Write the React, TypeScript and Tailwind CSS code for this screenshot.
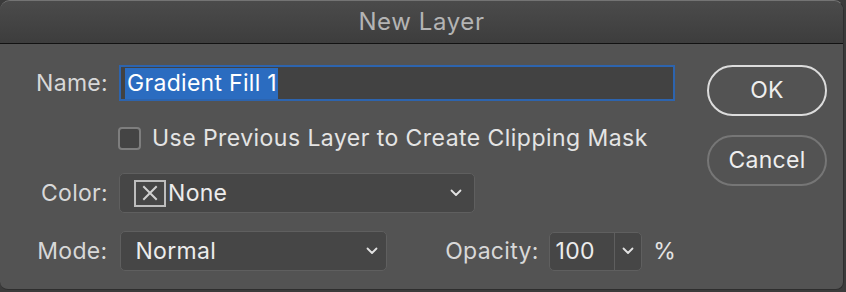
import React from 'react'

const Chevron: React.FC<{ className?: string }> = ({ className }) => (
  <svg width="12" height="8" viewBox="0 0 12 8" className={className}>
    <path d="M1.5 1.5 L6 6 L10.5 1.5" fill="none" stroke="#e2e2e2" strokeWidth="1.8" strokeLinecap="round" strokeLinejoin="round" />
  </svg>
)

const App: React.FC = () => {
  return (
    <div className="w-[846px] h-[292px] bg-[#3b3b3b] font-['Inter','Liberation_Sans',sans-serif] tracking-[0.3px]">
      <div className="w-[844px] h-[290px] rounded-t-[10px] rounded-b-[8px] overflow-hidden bg-[#535353] border-t border-[#747474] border-r border-r-[#2e2e2e] border-b border-b-[#2e2e2e] flex flex-col">
        {/* Title bar */}
        <div className="h-[43px] shrink-0 bg-gradient-to-b from-[#4b4b4b] to-[#3d3d3d] border-b border-[#121212] flex items-center justify-center">
          <span className="text-[24px] text-[#b4b4b4] tracking-[0.6px]">New Layer</span>
        </div>

        {/* Body */}
        <div className="flex">
          {/* Form */}
          <div className="w-[676px] flex flex-col text-[23px] text-[#d8d8d8]">
            {/* Name */}
            <div className="flex items-center mt-[21px] h-[36px]">
              <span className="w-[108px] text-right">Name:</span>
              <div className="ml-[11px] w-[556px] h-[36px] bg-[#424242] border-2 border-[#2d64ae] flex items-center pl-[4px]">
                <span className="bg-[#2b6cc0] text-white text-[23px] leading-[31px] pl-[2px] pr-[1px]">Gradient Fill 1</span>
              </div>
            </div>

            {/* Checkbox */}
            <div className="flex items-center mt-[25px] h-[24px] pl-[118px]">
              <div className="w-[23px] h-[23px] rounded-[4px] border-2 border-[#7e7e7e] bg-[#444444]" />
              <span className="ml-[11px] text-[23px] text-[#e4e4e4] tracking-[0.45px]">Use Previous Layer to Create Clipping Mask</span>
            </div>

            {/* Color */}
            <div className="flex items-center mt-[23px] h-[40px]">
              <span className="w-[108px] text-right">Color:</span>
              <div className="ml-[11px] w-[356px] h-[40px] rounded-[5px] bg-[#464646] border border-[#5f5f5f] flex items-center pl-[14px] pr-[12px]">
                <div className="w-[32px] h-[27px] border-2 border-[#bdbdbd] flex items-center justify-center">
                  <svg width="16" height="16" viewBox="0 0 16 16">
                    <path d="M2 2 L14 14 M14 2 L2 14" stroke="#d0d0d0" strokeWidth="2" strokeLinecap="square" />
                  </svg>
                </div>
                <span className="ml-[2px] text-[23px] text-[#ececec]">None</span>
                <Chevron className="ml-auto" />
              </div>
            </div>

            {/* Mode + Opacity */}
            <div className="flex items-center mt-[18px] h-[40px]">
              <span className="w-[108px] text-right">Mode:</span>
              <div className="ml-[13px] w-[268px] h-[40px] rounded-[5px] bg-[#464646] border border-[#5f5f5f] flex items-center pl-[14px] pr-[8px]">
                <span className="text-[23px] text-[#ececec]">Normal</span>
                <Chevron className="ml-auto" />
              </div>
              <span className="ml-[58px]">Opacity:</span>
              <div className="ml-[10px] w-[94px] h-[39px] rounded-[5px] bg-[#464646] border border-[#5f5f5f] flex">
                <span className="w-[65px] border-r border-[#5f5f5f] flex items-center pl-[6px] text-[23px] text-[#ececec]">100</span>
                <div className="flex-1 flex items-center justify-center">
                  <Chevron />
                </div>
              </div>
              <span className="ml-[11px] text-[#e4e4e4]">%</span>
            </div>
          </div>

          {/* Buttons */}
          <div className="ml-[31px] flex flex-col">
            <button className="mt-[21px] w-[120px] h-[51px] rounded-full border-2 border-[#dcdcdc] text-[23px] text-[#eeeeee]">
              OK
            </button>
            <button className="mt-[19px] w-[120px] h-[51px] rounded-full border-2 border-[#767676] text-[23px] text-[#eeeeee]">
              Cancel
            </button>
          </div>
        </div>
      </div>
    </div>
  )
}

export default App
